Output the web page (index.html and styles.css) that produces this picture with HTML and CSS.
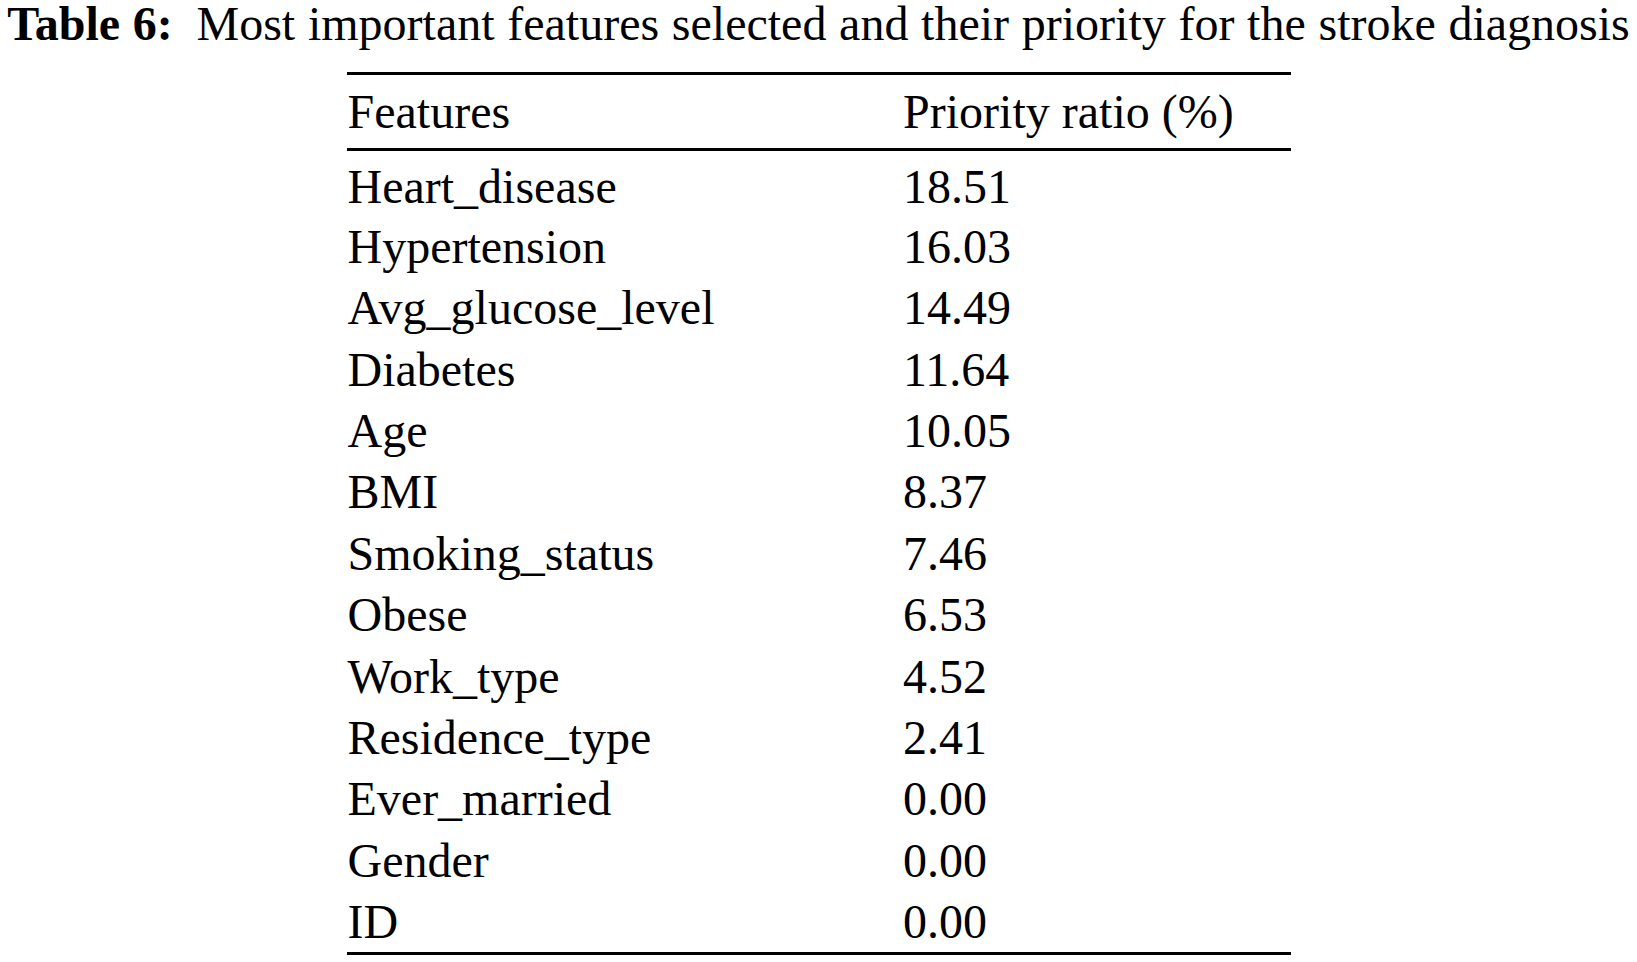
FILE: index.html
```html
<!DOCTYPE html>
<html lang="en">
<head>
<meta charset="utf-8">
<title>Table 6</title>
<link rel="stylesheet" href="styles.css">
</head>
<body>
<div class="page">
  <p class="caption"><span class="label">Table 6:</span> Most important features selected and their priority for the stroke diagnosis</p>
  <table class="data">
    <thead>
      <tr><th class="c1">Features</th><th class="c2">Priority ratio (%)</th></tr>
    </thead>
    <tbody>
      <tr><td class="c1">Heart_disease</td><td class="c2">18.51</td></tr>
      <tr><td class="c1">Hypertension</td><td class="c2">16.03</td></tr>
      <tr><td class="c1">Avg_glucose_level</td><td class="c2">14.49</td></tr>
      <tr><td class="c1">Diabetes</td><td class="c2">11.64</td></tr>
      <tr><td class="c1">Age</td><td class="c2">10.05</td></tr>
      <tr><td class="c1">BMI</td><td class="c2">8.37</td></tr>
      <tr><td class="c1">Smoking_status</td><td class="c2">7.46</td></tr>
      <tr><td class="c1">Obese</td><td class="c2">6.53</td></tr>
      <tr><td class="c1">Work_type</td><td class="c2">4.52</td></tr>
      <tr><td class="c1">Residence_type</td><td class="c2">2.41</td></tr>
      <tr><td class="c1">Ever_married</td><td class="c2">0.00</td></tr>
      <tr><td class="c1">Gender</td><td class="c2">0.00</td></tr>
      <tr class="last"><td class="c1">ID</td><td class="c2">0.00</td></tr>
    </tbody>
  </table>
</div>
</body>
</html>
```
FILE: styles.css
```css
html, body {
  margin: 0;
  padding: 0;
  background: #ffffff;
}

body {
  font-family: "Liberation Serif", "Times New Roman", serif;
  color: #000000;
  font-size: 48px;
}

.page {
  display: flex;
  flex-direction: column;
  align-items: center;
}

.caption {
  margin: 0;
  font-size: 48px;
  line-height: 47px;
  white-space: nowrap;
  text-align: center;
  word-spacing: 0.7px;
}

.caption .label {
  font-weight: bold;
  margin-right: 11px;
}

.data {
  margin-top: 25px;
  width: 944px;
  border-collapse: collapse;
  border-top: 3px solid #000;
  border-bottom: 3px solid #000;
}

.data th,
.data td {
  font-weight: normal;
  text-align: left;
  vertical-align: top;
  padding: 0;
  line-height: 46px;
  white-space: nowrap;
}

.data .c1 {
  width: 556px;
  padding-left: 1px;
}

.data .c2 {
  width: 387px;
}

.data thead th {
  height: 76px;
  box-sizing: border-box;
  padding-top: 14px;
  border-bottom: 3px solid #000;
}

.data tbody td {
  height: 61.4px;
  box-sizing: border-box;
  padding-top: 13px;
}

.data tbody tr.last td {
  height: 67px;
}
```
